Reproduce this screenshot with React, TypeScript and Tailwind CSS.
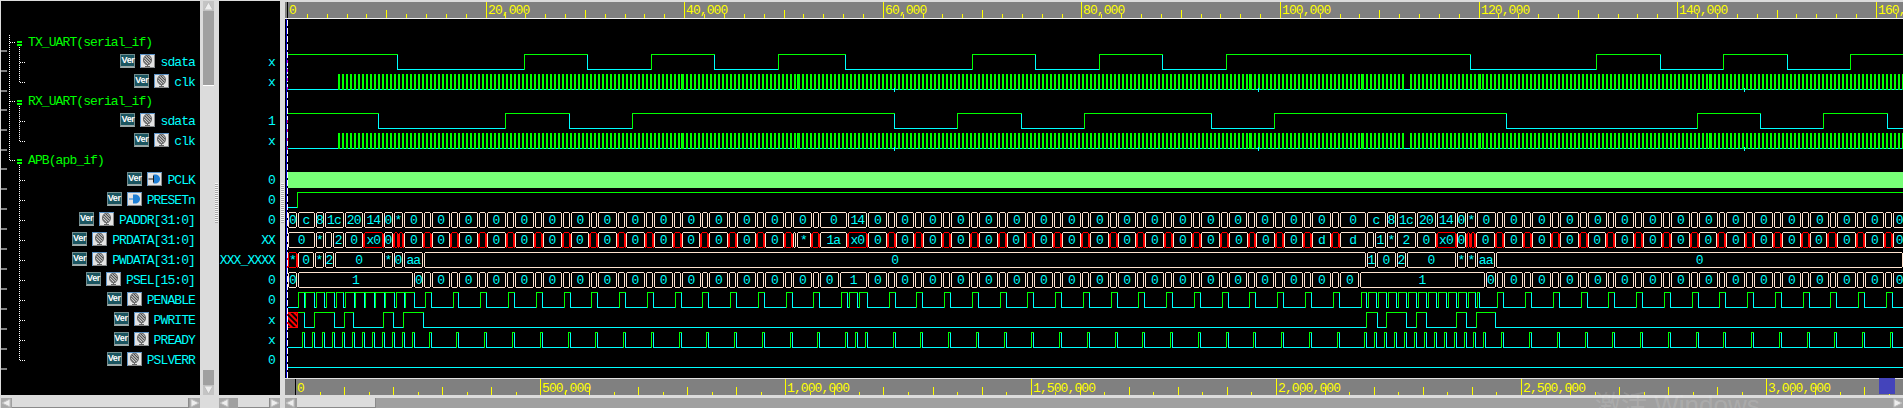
const END = 1906;

type Row = { name: string; group?: boolean; value?: string; gate?: "clk" | "rst" };

const rows: Row[] = [
  { name: "TX_UART(serial_if)", group: true },
  { name: "sdata", value: "x" },
  { name: "clk", value: "x" },
  { name: "RX_UART(serial_if)", group: true },
  { name: "sdata", value: "1" },
  { name: "clk", value: "x" },
  { name: "APB(apb_if)", group: true },
  { name: "PCLK", value: "0", gate: "clk" },
  { name: "PRESETn", value: "0", gate: "rst" },
  { name: "PADDR[31:0]", value: "0" },
  { name: "PRDATA[31:0]", value: "XX" },
  { name: "PWDATA[31:0]", value: "XXX_XXXX" },
  { name: "PSEL[15:0]", value: "0" },
  { name: "PENABLE", value: "0" },
  { name: "PWRITE", value: "x" },
  { name: "PREADY", value: "x" },
  { name: "PSLVERR", value: "0" },
];

// edges were read off 3x crops, so each run keeps the crop's left edge as offset
const runs = (off: number, s: string) =>
  s.split(" ").map((p) => p.split("-").map((n) => off + Number(n) / 3));

const enablePulses = [
  ...runs(270, "85-103 106-133 137-163 168-193 198-220 226-253 256-283 286-313 316-343 346-373 378-401 405-432 466-484 550-565 631-649 715-733 799-817 883-901 964-982 1048-1066 1132-1150"),
  ...runs(660, "46-64 127-145 211-229 295-313 379-397 460-478 544-562 568-592 598-622 688-706 769-787 853-871 937-955 1021-1039 1102-1120"),
  ...runs(1050, "16-34 100-118 184-202 265-283 349-367 433-451 517-535 598-616 682-700 766-784 850-868 934-949 955-979 985-1009 1015-1039 1045-1069 1075-1099 1105-1129 1135-1159 1165-1189 1195-1219 1225-1249 1255-1276 1282-1288"),
  ...runs(1480, "52-70 136-154 220-238 304-322 385-403 469-487 553-571 637-655 718-736 802-820 886-904 970-988 1051-1069 1135-1153 1219-1237"),
];

const readyPulses = [
  ...runs(270, "97-103 127-133 157-163 187-193 217-223 247-253 277-283 307-313 337-343 367-373 397-403 427-433 478-484 558-564 643-649 727-733 811-817 895-901 976-982 1060-1066 1144-1150"),
  ...runs(660, "58-64 139-145 223-229 307-313 391-397 472-478 556-562 586-592 616-622 700-706 781-787 865-871 949-955 1033-1039 1114-1120"),
  ...runs(1050, "28-34 112-118 196-202 277-283 361-367 445-451 529-535 610-616 694-700 778-784 862-868 943-949 973-979 1003-1009 1033-1039 1063-1069 1093-1099 1123-1129 1153-1159 1183-1189 1213-1219 1243-1249 1270-1276"),
  ...runs(1480, "10-16 64-70 148-154 232-238 316-322 397-403 481-487 565-571 649-655 730-736 814-820 898-904 982-988 1063-1069 1147-1153 1231-1237"),
];

const writePulses: number[][] = [
  [297, 304], [314, 334], [344, 353], [383, 393], [403, 423],
  [1366, 1376.5], [1386, 1406], [1416, 1426], [1456, 1466], [1476, 1495],
];

const txPulses: number[][] = [
  [287, 397], [524, 587], [651, 714], [778, 845], [972, 1035], [1099, 1162], [1226, 1470], [1596, 1660], [1723, 1787], [1850, END],
];
const rxPulses: number[][] = [
  [287, 378], [505, 569], [632, 894], [957, 1021], [1084, 1211], [1274, 1506], [1697, 1760], [1823, 1887],
];

type Seg = { a: number; b: number; label: string; red: boolean };

const marks = (off: number, s: string) =>
  s.split(" ").map((m) => {
    const [x, raw] = m.split(":");
    const red = raw.endsWith("!");
    return { x: off + Number(x) / 3, label: red ? raw.slice(0, -1) : raw, red };
  });

const toSegs = (list: { x: number; label: string; red: boolean }[]): Seg[] =>
  list.map((m, i) => ({ a: m.x, b: i + 1 < list.length ? list[i + 1].x : END, label: m.label, red: m.red }));

const idleA = "484:0 540: 565:0 624: 648:0 708: 732:0 792: 816:0 876: 900:0 960: 981:0 1041: 1065:0 1125: 1149:0";
const idleB = "40: 64:0 122: 145:0 205: 229:0 289: 313:0 373: 397:0 457: 478:0";
const idleC = "622:0 682: 706:0 762: 787:0 847: 871:0 931: 955:0 1015: 1039:0 1099: 1120:0";
const idleD = "10: 34:0 94: 118:0 178: 202:0 258: 283:0 343: 367:0 427: 451:0 511: 535:0 591: 616:0 672: 700:0 760: 784:0 844: 868:0";
const idleE = "48: 70:0 130: 154:0 214: 238:0 298: 322:0 382: 403:0 463: 487:0 547: 571:0 631: 655:0 715: 736:0 796: 820:0 880: 904:0 964: 988:0 1048: 1069:0 1129: 1153:0 1213: 1237:0";

const paddr = toSegs([
  ...marks(270, "52:0 82:c 134:8 162:1c 222:20 280:14 340:0 368:* 400:0 460: " + idleA),
  ...marks(660, idleB + " 562:14 " + idleC),
  ...marks(1050, idleD + " 948:c 1008:8 1038:1c 1098:20 1158:14 1218:0 1248:* 1278:0"),
  ...marks(1480, idleE),
]);

const prdata = toSegs([
  ...marks(270, "52:0 135:* 162: 187:2 222:0 280:x0! 340:0 368:! 385:! 400:0 460:! 484:0 540:! 565:0 624:! 648:0 708:! 732:0 792:! 816:0 876:! 900:0 957:! 981:0 1041:! 1065:0 1125:! 1149:0"),
  ...marks(660, "40:! 64:0 120:! 145:0 205:! 229:0 289:! 313:0 373:! 397: 408:* 453:! 478:1a 562:x0! 622:0 682:! 706:0 762:! 787:0 847:! 871:0 931:! 955:0 1015:! 1039:0 1095:! 1120:0"),
  ...marks(1050, "10:! 34:0 94:! 118:0 178:! 202:0 258:! 283:0 343:! 367:0 427:! 451:0 511:! 535:0 595:! 616:0 676:! 700:0 760:! 784:d 844:! 868:d 948: 972:1 1008:* 1038:2 1098:0 1158:x0! 1218:0 1248:! 1260:! 1275:0"),
  ...marks(1480, "46:! 70:0 130:! 154:0 214:! 238:0 298:! 322:0 378:! 403:0 463:! 487:0 547:! 571:0 631:! 655:0 712:! 736:0 796:! 820:0 880:! 904:0 964:! 988:0 1042:! 1069:0 1129:! 1153:0 1213:! 1237:0"),
]);

const pwdata = toSegs([
  ...marks(270, "52:*! 82:0 132:* 162:2 192:0 340:* 368:0 400:aa 460:0"),
  ...marks(1050, "948:1 978:0 1038:2 1068:0 1218:* 1248:* 1278:aa"),
  ...marks(1480, "46:0"),
]);
pwdata[pwdata.length - 1].b = 1903;

const psel = toSegs([
  ...marks(270, "52:0 82:1 430:0 460: " + idleA),
  ...marks(660, idleB + " 537:1 " + idleC),
  ...marks(1050, idleD + " 928:1"),
  ...marks(1480, "14:0 " + idleE),
]);

const snap = (x: number) => Math.round(x) + 0.5;

function Digital({ top, pulses, startHigh }: { top: number; pulses: number[][]; startHigh?: boolean }) {
  const hi = top + 0.5;
  const lo = top + 15.5;
  let green = "";
  let cyan = "";
  let prev = 287;
  pulses.forEach(([r, f], i) => {
    if (i === 0 && startHigh) {
      green += `M${snap(r)} ${hi}H${snap(f)}`;
    } else {
      cyan += `M${snap(prev)} ${lo}H${snap(r)}`;
      green += `M${snap(r)} ${lo}V${hi}H${snap(f)}`;
    }
    cyan += `M${snap(f)} ${hi}V${lo}`;
    prev = f;
  });
  cyan += `M${snap(prev)} ${lo}H${END}`;
  return (
    <g fill="none" shapeRendering="crispEdges">
      <path d={cyan} stroke="#00ffff" />
      <path d={green} stroke="#00ff00" />
    </g>
  );
}

const wideBars = [455, 570, 681, 797, 1023, 1249, 1361, 1480, 1591, 1709, 1814];

function Clock({ top }: { top: number }) {
  const bars: number[] = [];
  for (let x = 338; x < 1903; x += 4) {
    if (x >= 1406 && x < 1410) continue;
    bars.push(x);
  }
  return (
    <g shapeRendering="crispEdges">
      <path d={`M287 ${top + 15.5}H${END}`} stroke="#00ffff" fill="none" />
      {bars.map((x) => (
        <rect key={x} x={x} y={top} width="2" height="16" fill="#00ff00" />
      ))}
      {wideBars.map((x) => (
        <rect key={x} x={x} y={top} width="1" height="16" fill="#00ff00" />
      ))}
      {[894, 1258, 1744].map((x) => (
        <path key={x} d={`M${x + 0.5} ${top + 14}V${top + 18}`} stroke="#00ffff" fill="none" />
      ))}
    </g>
  );
}

function Bus({ top, segs }: { top: number; segs: Seg[] }) {
  return (
    <g>
      {segs.map((s) => {
        const a = Math.round(s.a) + 1.5;
        const b = Math.round(s.b) - 0.5;
        const t = top + 0.5;
        const d = `M${a} ${t + 1}L${a + 1} ${t}H${b - 1}L${b} ${t + 1}V${t + 14}L${b - 1} ${t + 15}H${a + 1}L${a} ${t + 14}Z`;
        return (
          <g key={s.a}>
            <path d={d} fill="none" stroke={s.red ? "#ff0000" : "#ffe4d0"} shapeRendering="crispEdges" />
            {s.red && (
              <path d={`M${a - 1} ${t + 1}V${t + 15}M${b + 1} ${t + 1}V${t + 15}`} fill="none" stroke="#ff0000" shapeRendering="crispEdges" />
            )}
            {s.label && (
              <text x={(s.a + s.b) / 2} y={top + 11.5} textAnchor="middle" className="fill-[#00ffff] text-[13px] tracking-[-0.9px]">
                {s.label}
              </text>
            )}
          </g>
        );
      })}
    </g>
  );
}

function TopRuler() {
  const ticks = Array.from({ length: 82 }, (_, i) => i);
  return (
    <svg viewBox="285 2 1618 16" className="block w-[1618px] h-4 bg-[#808080]">
      {ticks.map((i) => {
        const x = snap(287 + i * 19.86);
        if (i % 10 === 0) {
          return (
            <g key={i}>
              <path d={`M${x} 2V18`} stroke={i === 0 ? "#000000" : "#ffff00"} shapeRendering="crispEdges" />
              <text x={x + 1.5} y="14" className="fill-[#ffff00] text-[13px] tracking-[-0.9px]">
                {(i * 2000).toLocaleString("en-US")}
              </text>
            </g>
          );
        }
        return <path key={i} d={`M${x} ${i % 5 === 0 ? 10 : 14}V18`} stroke="#ffff00" shapeRendering="crispEdges" />;
      })}
    </svg>
  );
}

function BottomRuler() {
  const ticks = Array.from({ length: 66 }, (_, i) => i);
  return (
    <svg viewBox="285 378 1618 17" className="block w-[1618px] h-[17px] bg-[#808080]">
      <path d="M285 378.5H1903" stroke="#e0e0e0" shapeRendering="crispEdges" />
      {ticks.map((i) => {
        const x = snap(295 + i * 24.52);
        if (i % 10 === 0) {
          return (
            <g key={i}>
              <path d={`M${x} 379V395`} stroke={i === 0 ? "#000000" : "#ffff00"} shapeRendering="crispEdges" />
              <text x={x + 1.5} y="392" className="fill-[#ffff00] text-[13px] tracking-[-0.9px]">
                {(i * 50000).toLocaleString("en-US")}
              </text>
            </g>
          );
        }
        return <path key={i} d={`M${x} ${i % 2 === 0 ? 387 : 392}V395`} stroke="#ffff00" shapeRendering="crispEdges" />;
      })}
      <rect x="1879" y="378" width="16" height="16" fill="#4444bb" />
    </svg>
  );
}

function WaveCanvas() {
  return (
    <svg viewBox="285 19 1618 359" className="block w-[1618px] h-[359px] bg-black">
      <defs>
        <pattern id="xhatch" width="4" height="4" patternUnits="userSpaceOnUse" patternTransform="rotate(45)">
          <rect width="4" height="2" fill="#ff0000" />
        </pattern>
      </defs>
      <Digital top={54} pulses={txPulses} startHigh />
      <Clock top={74} />
      <Digital top={113} pulses={rxPulses} startHigh />
      <Clock top={133} />
      <rect x="288" y="172" width="1615" height="16" fill="#77ff77" />
      <Digital top={192} pulses={[[297, END]]} />
      <Bus top={212} segs={paddr} />
      <Bus top={232} segs={prdata} />
      <Bus top={252} segs={pwdata} />
      <Bus top={272} segs={psel} />
      <Digital top={292} pulses={enablePulses} />
      <Digital top={312} pulses={writePulses} startHigh={false} />
      <rect x="287.5" y="312.5" width="10" height="15" fill="url(#xhatch)" stroke="#ff0000" shapeRendering="crispEdges" />
      <Digital top={332} pulses={readyPulses} />
      <path d={`M287 367.5H${END}`} stroke="#00ffff" shapeRendering="crispEdges" />
      {/* cursor column */}
      <path d="M286.5 19V378" stroke="#0000cc" shapeRendering="crispEdges" />
      <path d="M287.5 20V378" stroke="#ffffff" strokeDasharray="6 2" shapeRendering="crispEdges" />
      <path d="M287.5 60V92" stroke="#cc00cc" strokeDasharray="3 6" shapeRendering="crispEdges" />
      <path d="M287.5 120V150" stroke="#cc0066" strokeDasharray="3 6" shapeRendering="crispEdges" />
    </svg>
  );
}

function VerBadge() {
  return (
    <span className="flex w-[15px] h-[14px] items-center justify-center bg-[#1b5560] border border-[#6f8a8c] border-b-2 border-b-[#9aa8a8] text-white text-[9px] leading-none tracking-[-0.3px] font-['Liberation_Sans',sans-serif] font-bold">
      Ver
    </span>
  );
}

function SignalIcon({ gate }: { gate?: "clk" | "rst" }) {
  return (
    <svg viewBox="0 0 15 14" className="block w-[15px] h-[14px]">
      <defs>
        <pattern id="dots" width="2" height="2" patternUnits="userSpaceOnUse" patternTransform="rotate(45)">
          <rect width="2" height="1" fill="#444444" />
          <rect y="1" width="2" height="1" fill="#dddddd" />
        </pattern>
      </defs>
      <rect x="0.5" y="0.5" width="14" height="13" fill="#e4e4e4" stroke="#5d94c8" />
      <path d="M1 13.5H14.5V1" fill="none" stroke="#8a8a8a" />
      {!gate && (
        <>
          <ellipse cx="7.5" cy="6" rx="4" ry="4.8" fill="url(#dots)" stroke="#666666" />
          <path d="M7.5 10.5V12.5M5 12.5H10" stroke="#666666" fill="none" />
        </>
      )}
      {gate === "clk" && (
        <>
          <path d="M6.5 2.5H8C11 2.5 13 4.5 13 7C13 9.5 11 11.5 8 11.5H6.5Z" fill="#1e7fd6" />
          <path d="M1.5 7H6M6.5 3.5V10.5" stroke="#1a1a1a" fill="none" />
        </>
      )}
      {gate === "rst" && (
        <>
          <path d="M6 2.5H8C11 2.5 13 4.5 13 7C13 9.5 11 11.5 8 11.5H6Z" fill="#1e7fd6" />
          <path d="M2 7H6" stroke="#1e7fd6" fill="none" />
        </>
      )}
    </svg>
  );
}

function TreeLines() {
  const tickYs = [50, 70, 90, 109, 129, 149, 168, 188, 208, 228, 248, 268, 288, 308, 328, 348, 368];
  const stubs = [62, 82, 121, 141, 180, 200, 220, 240, 260, 280, 300, 320, 340, 360];
  const groups = [42, 101, 160];
  return (
    <svg viewBox="1 1 199 394" className="absolute inset-0 w-[199px] h-[394px]">
      {tickYs.map((y) => (
        <rect key={y} x="1" y={y} width="6" height="2" fill="#808080" />
      ))}
      <g stroke="#ffffff" strokeDasharray="1 1" fill="none" shapeRendering="crispEdges">
        <path d="M9.5 35V160" />
        <path d="M19.5 47V82M19.5 106V141M19.5 165V360" />
        {groups.map((y) => (
          <path key={y} d={`M10 ${y + 0.5}H16`} />
        ))}
        {stubs.map((y) => (
          <path key={y} d={`M20 ${y + 0.5}H26`} />
        ))}
      </g>
      {groups.map((y) => (
        <g key={y} fill="#00ff00">
          <rect x="17" y={y - 1} width="5" height="2" />
          <rect x="17" y={y + 2} width="5" height="2" />
        </g>
      ))}
    </svg>
  );
}

function NamesPanel() {
  return (
    <div className="relative w-[199px] h-[394px] bg-black overflow-hidden">
      <TreeLines />
      <div className="relative flex flex-col pt-[32px] text-[13px] leading-none tracking-[-0.9px]">
        {rows.map((r, i) =>
          r.group ? (
            <div key={i} className="h-[19px] flex items-center pl-[27px] text-[#00ff00]">
              {r.name}
            </div>
          ) : (
            <div key={i} className="h-5 flex items-center justify-end gap-[5px] pr-[5px] text-[#00ffff]">
              <span className="flex items-center gap-[5px] mb-[2px]">
                <VerBadge />
                <SignalIcon gate={r.gate} />
              </span>
              <span>{r.name}</span>
            </div>
          ),
        )}
      </div>
    </div>
  );
}

function ValuesPanel() {
  return (
    <div className="w-[61px] h-[394px] bg-black overflow-hidden flex flex-col pt-[32px] text-[13px] leading-none tracking-[-0.9px] text-[#00ffff]">
      {rows.map((r, i) =>
        r.group ? (
          <div key={i} className="h-[19px]" />
        ) : (
          <div key={i} className="h-5 flex items-center justify-end pr-[5px] whitespace-nowrap">
            {r.value}
          </div>
        ),
      )}
    </div>
  );
}

function Arrow({ dir }: { dir: "up" | "down" | "left" | "right" }) {
  const pts = {
    up: "5.5,1 10,9 1,9",
    down: "1,1 10,1 5.5,9",
    left: "9,1 9,9 1,5",
    right: "1,1 1,9 9,5",
  }[dir];
  const vertical = dir === "up" || dir === "down";
  return (
    <svg viewBox={vertical ? "0 0 11 10" : "0 0 10 10"} className={vertical ? "block w-[11px] h-[10px] shrink-0 bg-[#c4c4c4]" : "block w-[10px] h-[10px] shrink-0 bg-[#a8a8a8]"}>
      <polygon points={pts} fill="#eeeeee" stroke="#bdbdbd" />
    </svg>
  );
}

function VScroll() {
  return (
    <div className="w-[11px] h-[394px] flex flex-col bg-[#a0a0a0]">
      <Arrow dir="up" />
      <div className="h-[74px]" />
      <div className="h-[285px] bg-[#dcdcdc] border-t border-white" />
      <div className="flex-1" />
      <Arrow dir="down" />
    </div>
  );
}

function HScroll({ width, lead, thumb }: { width: string; lead: string; thumb: string }) {
  return (
    <div className={`${width} h-[10px] flex bg-[#a0a0a0]`}>
      <Arrow dir="left" />
      <div className={lead} />
      <div className={`${thumb} h-[10px] bg-[#dcdcdc] border-r border-b border-[#8a8a8a]`} />
      <div className="flex-1" />
      <Arrow dir="right" />
    </div>
  );
}

function Sash() {
  return (
    <div className="w-[5px] h-[394px] pl-px pt-[182px]">
      <div className="w-[3px] h-10 bg-[repeating-linear-gradient(to_bottom,#f6f6f6_0,#f6f6f6_1px,#a8a8a8_1px,#a8a8a8_2px)]" />
    </div>
  );
}

export default function App() {
  return (
    <div className="relative w-[1903px] h-[410px] overflow-hidden bg-[#dcdcdc] font-['Liberation_Mono',monospace]">
      <div className="flex h-[395px]">
        <div className="pl-px pt-px">
          <NamesPanel />
        </div>
        <div className="pl-[3px] pt-px">
          <VScroll />
        </div>
        <div className="pt-px">
          <Sash />
        </div>
        <div className="pt-px">
          <ValuesPanel />
        </div>
        <div className="pt-px">
          <Sash />
        </div>
        <div className="flex flex-col pt-[2px]">
          <TopRuler />
          <div className="h-px bg-[#f0f0f0]" />
          <WaveCanvas />
          <BottomRuler />
        </div>
      </div>
      <div className="flex h-[15px] pt-[3px] border-b-2 border-white">
        <div className="pl-px">
          <HScroll width="w-[199px]" lead="w-px" thumb="w-[177px]" />
        </div>
        <div className="pl-[19px]">
          <HScroll width="w-[61px]" lead="w-[9px]" thumb="w-[32px]" />
        </div>
        <div className="pl-[5px]">
          <HScroll width="w-[1618px]" lead="w-[2px]" thumb="w-[79px]" />
        </div>
      </div>
      {/* activation watermark sitting over the window */}
      <span className="absolute left-[1595px] top-[392px] text-[26px] leading-none text-white/15 font-['Liberation_Sans','Noto_Sans_CJK_SC',sans-serif]">
        激活 Windows
      </span>
    </div>
  );
}
